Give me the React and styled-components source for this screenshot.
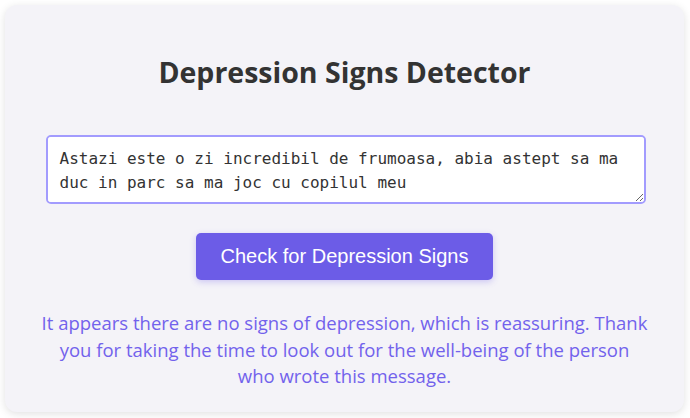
import React, { useState } from 'react';
import styled, { createGlobalStyle } from 'styled-components';

const GlobalStyle = createGlobalStyle`
  html, body {
    margin: 0;
    padding: 0;
    background: #ffffff;
  }
  * {
    box-sizing: border-box;
  }
`;

const Page = styled.div`
  padding: 5px 6px 7px 5px;
`;

const Card = styled.div`
  background-color: #f4f3f8;
  border-radius: 12px;
  box-shadow: 0 2px 8px rgba(0, 0, 0, 0.12);
  padding: 20px 30px 22px;
  display: flex;
  flex-direction: column;
  align-items: center;
  font-family: "Open Sans", "Noto Sans", sans-serif;
`;

const Title = styled.h1`
  font-size: 28.5px;
  font-weight: 700;
  line-height: 34px;
  color: #333333;
  margin: 30px 0 46px;
`;

const TextInput = styled.textarea`
  width: 600px;
  height: 69px;
  padding: 10px 12px;
  border: 2px solid #a29bfe;
  border-radius: 5px;
  background: #ffffff;
  font-family: "DejaVu Sans Mono", "Liberation Mono", monospace;
  font-size: 16px;
  line-height: 24px;
  color: #333333;
  outline: none;
  margin-left: 2px;
`;

const CheckButton = styled.button`
  margin-top: 29px;
  padding: 12px 25px;
  border: none;
  border-radius: 5px;
  background-color: #6c5ce7;
  color: #ffffff;
  font-family: "Liberation Sans", Arial, sans-serif;
  font-size: 20px;
  line-height: 23px;
  box-shadow: 0 2px 6px rgba(108, 92, 231, 0.3);
  cursor: pointer;
`;

const Result = styled.p`
  max-width: 609px;
  margin: 30px 0 0;
  text-align: center;
  color: #7262ec;
  font-size: 18.5px;
  line-height: 26.5px;
`;

const App = () => {
    const [text, setText] = useState(
        'Astazi este o zi incredibil de frumoasa, abia astept sa ma duc in parc sa ma joc cu copilul meu'
    );

    return (
        <>
            <GlobalStyle />
            <Page>
                <Card>
                    <Title>Depression Signs Detector</Title>
                    <TextInput value={text} onChange={e => setText(e.target.value)} />
                    <CheckButton>Check for Depression Signs</CheckButton>
                    <Result>
                        It appears there are no signs of depression, which is reassuring. Thank you for taking the time to look out for the well-being of the person who wrote this message.
                    </Result>
                </Card>
            </Page>
        </>
    );
};

export default App;
